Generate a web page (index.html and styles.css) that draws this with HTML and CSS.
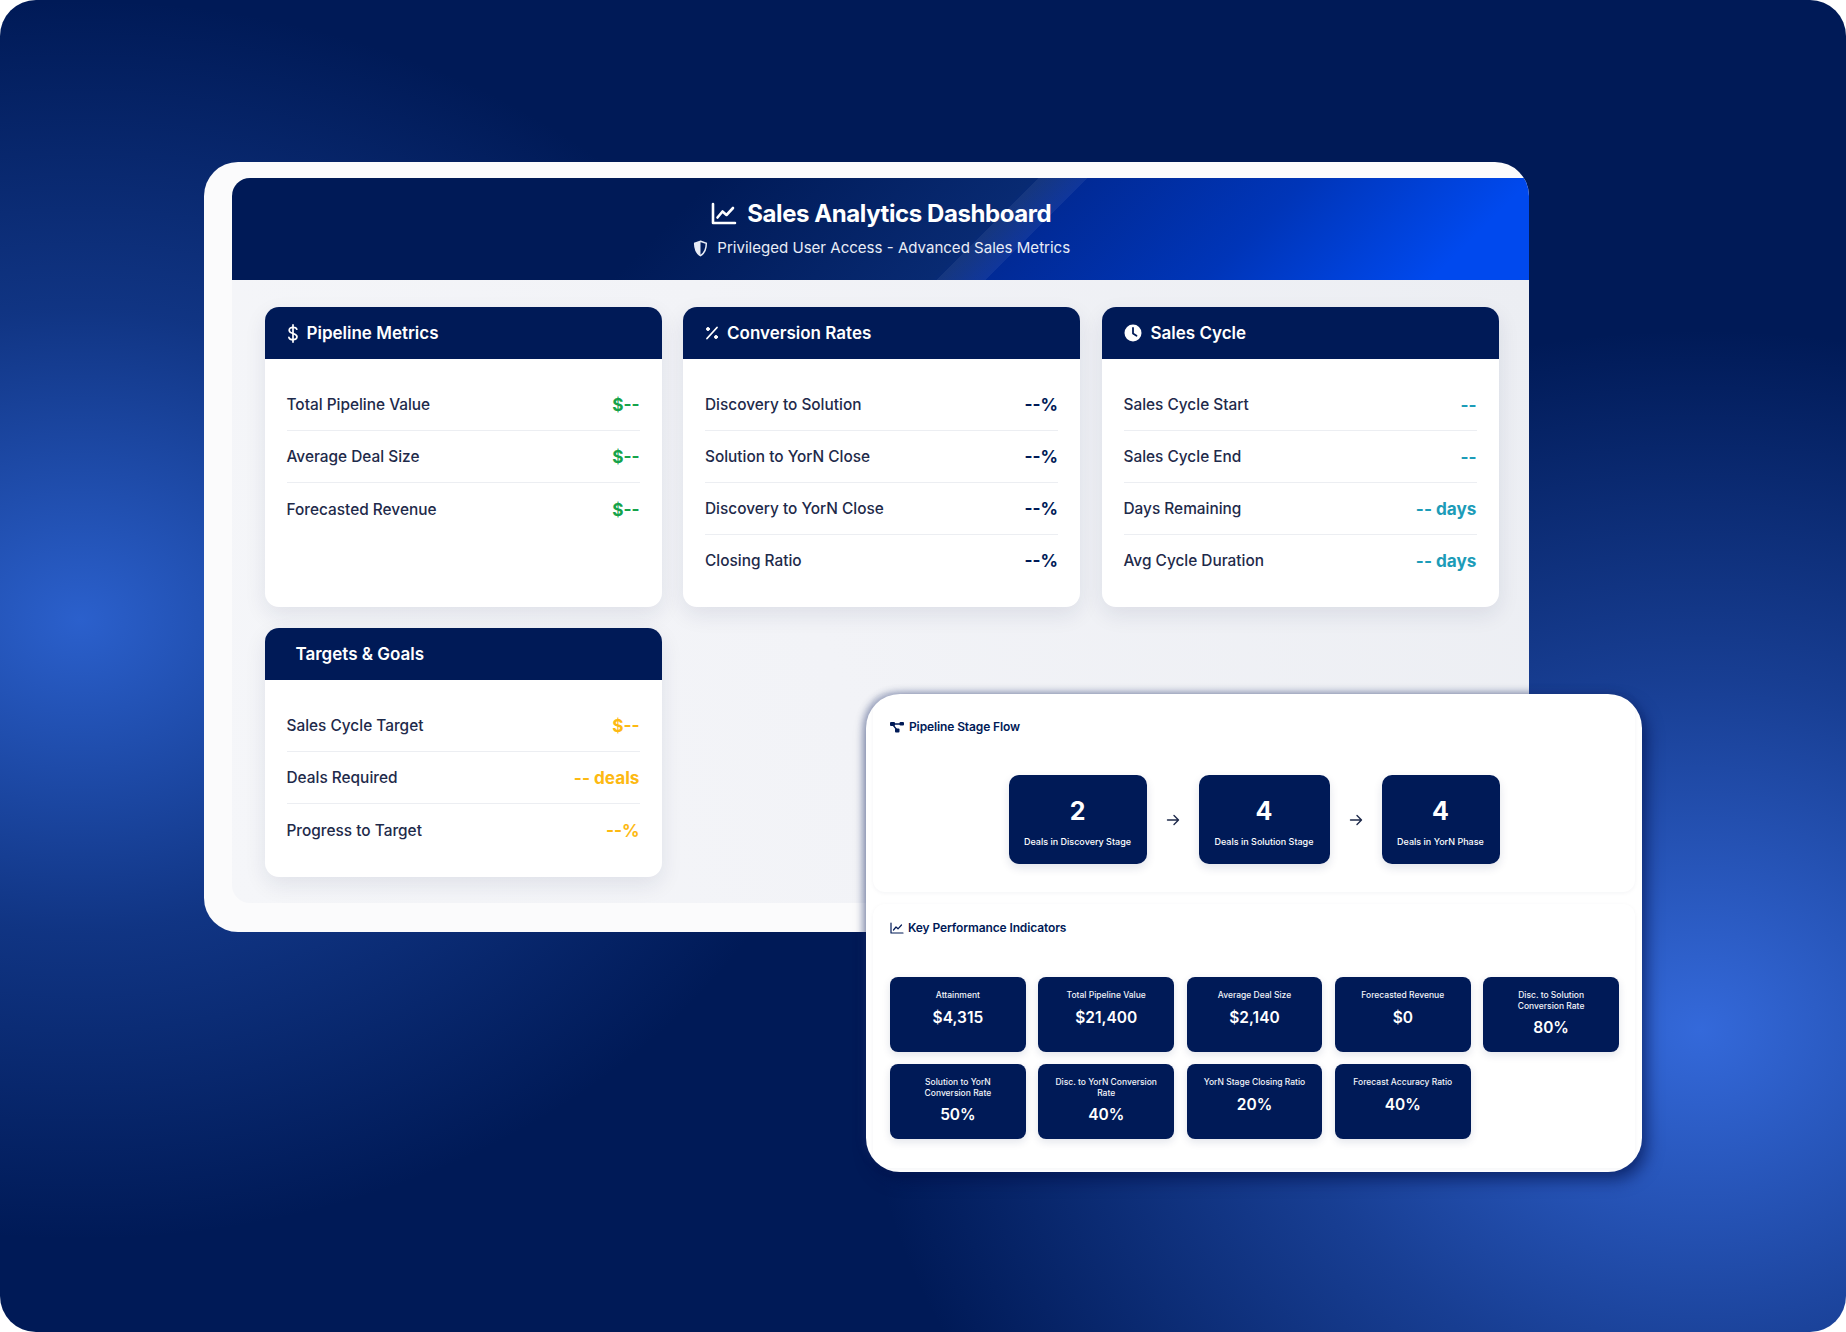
FILE: index.html
```html
<!DOCTYPE html>
<html lang="en">
<head>
    <meta charset="UTF-8">
    <title>Sales Analytics Dashboard</title>
    <link rel="stylesheet" href="styles.css">
</head>
<body>
    <div class="backdrop">
        <div class="frame">
            <div class="top-bar">
                <h1>
                    <svg class="icon-title" viewBox="0 0 26 24" fill="none" stroke="currentColor" stroke-width="2.6" stroke-linecap="round" stroke-linejoin="round"><path d="M2 2v19h22"/><path d="M6.5 15.5l5-6 4 3.5 6.5-7"/></svg>
                    Sales Analytics Dashboard
                </h1>
                <p>
                    <svg class="icon-shield" viewBox="0 0 16 18"><path fill="none" stroke="currentColor" stroke-width="1.6" d="M8 1.2l6.2 2.3c0 5.5-1.4 10.4-6.2 13.2C3.2 13.900 1.800 9 1.800 3.500z"/><path fill="currentColor" d="M2 3.500L8 1.200v15.500C3.200 13.900 1.800 9 2 3.500z"/></svg>
                    Privileged User Access - Advanced Sales Metrics
                </p>
            </div>
            <div class="content">
                <div class="grid">
                    <div class="card">
                        <div class="card-head">
                            <svg class="icon-head dollar" viewBox="0 0 12 20" fill="none" stroke="currentColor" stroke-width="1.800" stroke-linecap="round"><path d="M6 1v18"/><path d="M10 5.500C9.500 4 8 3.500 6 3.500c-2.500 0-4 1.300-4 3 0 4.500 8.200 2.500 8.200 7 0 1.800-1.700 3-4.200 3-2.200 0-3.800-.7-4.300-2.400"/></svg>
                            Pipeline Metrics
                        </div>
                        <div class="card-body">
                            <div class="row"><span>Total Pipeline Value</span><b class="green">$--</b></div>
                            <div class="row"><span>Average Deal Size</span><b class="green">$--</b></div>
                            <div class="row"><span>Forecasted Revenue</span><b class="green">$--</b></div>
                        </div>
                    </div>
                    <div class="card">
                        <div class="card-head">
                            <svg class="icon-head percent" viewBox="0 0 14 14" fill="none" stroke="currentColor" stroke-width="1.800" stroke-linecap="round"><path d="M12 1.500L2 12.500"/><circle cx="3" cy="3" r="1.500" fill="currentColor" stroke-width="1"/><circle cx="11" cy="11" r="1.500" fill="currentColor" stroke-width="1"/></svg>
                            Conversion Rates
                        </div>
                        <div class="card-body">
                            <div class="row"><span>Discovery to Solution</span><b class="navy">--%</b></div>
                            <div class="row"><span>Solution to YorN Close</span><b class="navy">--%</b></div>
                            <div class="row"><span>Discovery to YorN Close</span><b class="navy">--%</b></div>
                            <div class="row"><span>Closing Ratio</span><b class="navy">--%</b></div>
                        </div>
                    </div>
                    <div class="card">
                        <div class="card-head">
                            <svg class="icon-head clock" viewBox="0 0 18 18"><circle cx="9" cy="9" r="8.500" fill="currentColor"/><path d="M9 4v5.500l3.500 2.200" fill="none" stroke="#001a57" stroke-width="1.800" stroke-linecap="round" stroke-linejoin="round"/></svg>
                            Sales Cycle
                        </div>
                        <div class="card-body">
                            <div class="row"><span>Sales Cycle Start</span><b class="teal">--</b></div>
                            <div class="row"><span>Sales Cycle End</span><b class="teal">--</b></div>
                            <div class="row"><span>Days Remaining</span><b class="teal">-- days</b></div>
                            <div class="row"><span>Avg Cycle Duration</span><b class="teal">-- days</b></div>
                        </div>
                    </div>
                    <div class="card">
                        <div class="card-head no-icon">Targets &amp; Goals</div>
                        <div class="card-body">
                            <div class="row"><span>Sales Cycle Target</span><b class="amber">$--</b></div>
                            <div class="row"><span>Deals Required</span><b class="amber">-- deals</b></div>
                            <div class="row"><span>Progress to Target</span><b class="amber">--%</b></div>
                        </div>
                    </div>
                </div>
            </div>
        </div>

        <div class="panel">
            <div class="section flow">
                <h2>
                    <svg class="icon-small" viewBox="0 0 14 12"><rect x="0" y="1" width="5" height="4" rx="1" fill="currentColor"/><rect x="9.500" y="1" width="4.500" height="3.500" rx="1" fill="currentColor"/><rect x="5" y="7.500" width="4.500" height="4" rx="1" fill="currentColor"/><path d="M3 3h8M3 4l4 5" stroke="currentColor" stroke-width="1.300" fill="none"/></svg>
                    Pipeline Stage Flow
                </h2>
                <div class="stages">
                    <div class="stage s1"><strong>2</strong><span>Deals in Discovery Stage</span></div>
                    <svg class="arrow" viewBox="0 0 14 14" fill="none" stroke="currentColor" stroke-width="1.400" stroke-linecap="round" stroke-linejoin="round"><path d="M1.500 7h11M8 2.500L12.500 7 8 11.500"/></svg>
                    <div class="stage s2"><strong>4</strong><span>Deals in Solution Stage</span></div>
                    <svg class="arrow" viewBox="0 0 14 14" fill="none" stroke="currentColor" stroke-width="1.400" stroke-linecap="round" stroke-linejoin="round"><path d="M1.500 7h11M8 2.500L12.500 7 8 11.500"/></svg>
                    <div class="stage s3"><strong>4</strong><span>Deals in YorN Phase</span></div>
                </div>
            </div>
            <div class="section kpis">
                <h2 class="tight">
                    <svg class="icon-small" viewBox="0 0 14 12" fill="none" stroke="currentColor" stroke-width="1.200" stroke-linecap="round" stroke-linejoin="round"><path d="M1 1v10h12"/><path d="M3.500 8l2.500-3 2 1.800 3.500-3.800"/></svg>
                    Key Performance Indicators
                </h2>
                <div class="kpi-grid">
                    <div class="kpi"><span>Attainment</span><strong>$4,315</strong></div>
                    <div class="kpi"><span>Total Pipeline Value</span><strong>$21,400</strong></div>
                    <div class="kpi"><span>Average Deal Size</span><strong>$2,140</strong></div>
                    <div class="kpi"><span>Forecasted Revenue</span><strong>$0</strong></div>
                    <div class="kpi"><span>Disc. to Solution Conversion Rate</span><strong>80%</strong></div>
                    <div class="kpi"><span>Solution to YorN Conversion Rate</span><strong>50%</strong></div>
                    <div class="kpi"><span>Disc. to YorN Conversion Rate</span><strong>40%</strong></div>
                    <div class="kpi"><span>YorN Stage Closing Ratio</span><strong>20%</strong></div>
                    <div class="kpi"><span>Forecast Accuracy Ratio</span><strong>40%</strong></div>
                </div>
            </div>
        </div>
    </div>
</body>
</html>
```

FILE: styles.css
```css
html, body {
    margin: 0;
    background: #fff;
}

body {
    font-family: 'Inter', sans-serif;
    color: #1e2a4a;
    overflow: hidden;
}

h1, h2, p {
    margin: 0;
}

.backdrop {
    position: relative;
    width: 1846px;
    height: 1332px;
    border-radius: 36px;
    overflow: hidden;
    background:
        radial-gradient(ellipse 780px 620px at 80px 620px, #2b60cc 0%, rgba(43, 96, 204, 0.38) 50%, rgba(43, 96, 204, 0) 100%),
        radial-gradient(ellipse 840px 700px at 1700px 1030px, #3469da 0%, rgba(52, 105, 218, 0.46) 50%, rgba(52, 105, 218, 0) 100%),
        #001a57;
}

/* main window */
.frame {
    position: absolute;
    left: 204px;
    top: 162px;
    width: 1324.5px;
    height: 770px;
    padding: 16px 0 0 28px;
    box-sizing: border-box;
    background: #fbfbfc;
    border-radius: 34px;
    overflow: hidden;
}

.top-bar {
    height: 102px;
    padding-top: 20px;
    box-sizing: border-box;
    text-align: center;
    color: #fff;
    border-radius: 18px 0 0 0;
    background:
        linear-gradient(135deg, transparent 570px, rgba(255, 255, 255, 0.06) 570px, rgba(255, 255, 255, 0.06) 605px, transparent 605px),
        linear-gradient(135deg, #001a57 0, #001a57 340px, #082a72 566px, #012a96 605px, #0035b8 760px, #0049ee 920px);
}

.top-bar h1 {
    display: flex;
    justify-content: center;
    align-items: center;
    gap: 10px;
    padding-left: 2px;
    font-size: 24px;
    font-weight: 700;
    line-height: 32px;
    letter-spacing: -0.42px;
}

.top-bar p {
    display: flex;
    justify-content: center;
    align-items: center;
    gap: 9px;
    margin-top: 7px;
    padding-left: 3px;
    font-size: 15.05px;
    line-height: 22px;
    color: #e8ecf6;
}

.icon-title {
    width: 26px;
    height: 24px;
}

.icon-shield {
    width: 15px;
    height: 17px;
}

.content {
    height: 623px;
    padding: 27px 30px 0 32.5px;
    box-sizing: border-box;
    background: linear-gradient(250deg, #eceef3 0%, #f2f3f7 55%, #f5f6f9 100%);
    border-radius: 0 0 0 18px;
}

.grid {
    display: grid;
    grid-template-columns: repeat(3, 1fr);
    grid-template-rows: 300px 249px;
    gap: 21px 21.5px;
}

.card {
    background: #fff;
    border-radius: 14px;
    overflow: hidden;
    box-shadow: 0 8px 22px rgba(20, 35, 80, 0.09);
}

.card-head {
    display: flex;
    align-items: center;
    gap: 8px;
    height: 52px;
    padding: 0 22px;
    background: #001a57;
    color: #fff;
    font-size: 17px;
    font-weight: 600;
}

.card-head.no-icon {
    padding-left: 31px;
}

.icon-head.dollar {
    width: 12px;
    height: 19px;
}

.icon-head.percent {
    width: 14px;
    height: 14px;
}

.icon-head.clock {
    width: 18px;
    height: 18px;
    margin-right: 1px;
}

.card-body {
    padding: 20.6px 22px 0;
}

.row {
    display: flex;
    justify-content: space-between;
    align-items: center;
    height: 51.8px;
    box-sizing: border-box;
    border-bottom: 1px solid #eceef2;
    font-size: 15.4px;
    font-weight: 500;
}

.row:last-child {
    border-bottom: 0;
}

.row b {
    font-size: 17.2px;
    font-weight: 700;
}

.green { color: #16a34a; }
.navy { color: #001a57; }
.teal { color: #1c9cb8; }
.amber { color: #fdb912; }

/* floating panel */
.panel {
    position: absolute;
    left: 866px;
    top: 694px;
    width: 776px;
    height: 478px;
    padding: 0 7px;
    box-sizing: border-box;
    background: #fff;
    border-radius: 34px;
    box-shadow: -3px -2px 7px rgba(30, 50, 110, 0.38), 5px 8px 16px rgba(0, 15, 70, 0.6);
}

.section {
    border-radius: 12px;
    box-shadow: 0 1px 4px rgba(20, 35, 80, 0.05);
    box-sizing: border-box;
}

.section h2 {
    display: flex;
    align-items: center;
    gap: 5px;
    font-size: 12px;
    font-weight: 600;
    color: #001a57;
    line-height: 16px;
    letter-spacing: -0.12px;
}

.section h2.tight {
    gap: 4px;
}

.icon-small {
    width: 14px;
    height: 12px;
}

.flow {
    height: 198px;
    padding: 25px 17px 0;
}

.stages {
    display: flex;
    align-items: center;
    justify-content: center;
    margin-top: 40px;
    color: #1e2a4a;
}

.stage {
    display: flex;
    flex-direction: column;
    align-items: center;
    height: 89px;
    padding-top: 22px;
    box-sizing: border-box;
    background: #001a57;
    border-radius: 10px;
    color: #fff;
    box-shadow: 0 4px 10px rgba(20, 35, 80, 0.12);
}

.s1 { width: 138px; }
.s2 { width: 131px; }
.s3 { width: 118px; }

.stage strong {
    font-size: 25px;
    font-weight: 700;
    line-height: 28px;
}

.stage span {
    margin-top: 11px;
    font-size: 9px;
    font-weight: 500;
    line-height: 12px;
}

.arrow {
    width: 14px;
    height: 14px;
    margin: 0 19px;
}

.kpis {
    height: 264px;
    margin-top: 12px;
    padding: 16px 17px 0;
}

.kpi-grid {
    display: grid;
    grid-template-columns: repeat(5, 135.8px);
    grid-auto-rows: 74.5px;
    gap: 12.5px;
    margin-top: 41px;
}

.kpi {
    display: flex;
    flex-direction: column;
    align-items: center;
    padding: 13px 14px 0;
    box-sizing: border-box;
    background: #001a57;
    border-radius: 8px;
    color: #fff;
    text-align: center;
    box-shadow: 0 3px 8px rgba(20, 35, 80, 0.12);
}

.kpi span {
    font-size: 8.5px;
    font-weight: 500;
    line-height: 10.5px;
    color: #f2f4fa;
}

.kpi strong {
    margin-top: 7px;
    font-size: 15.5px;
    font-weight: 600;
    line-height: 20px;
}
```
